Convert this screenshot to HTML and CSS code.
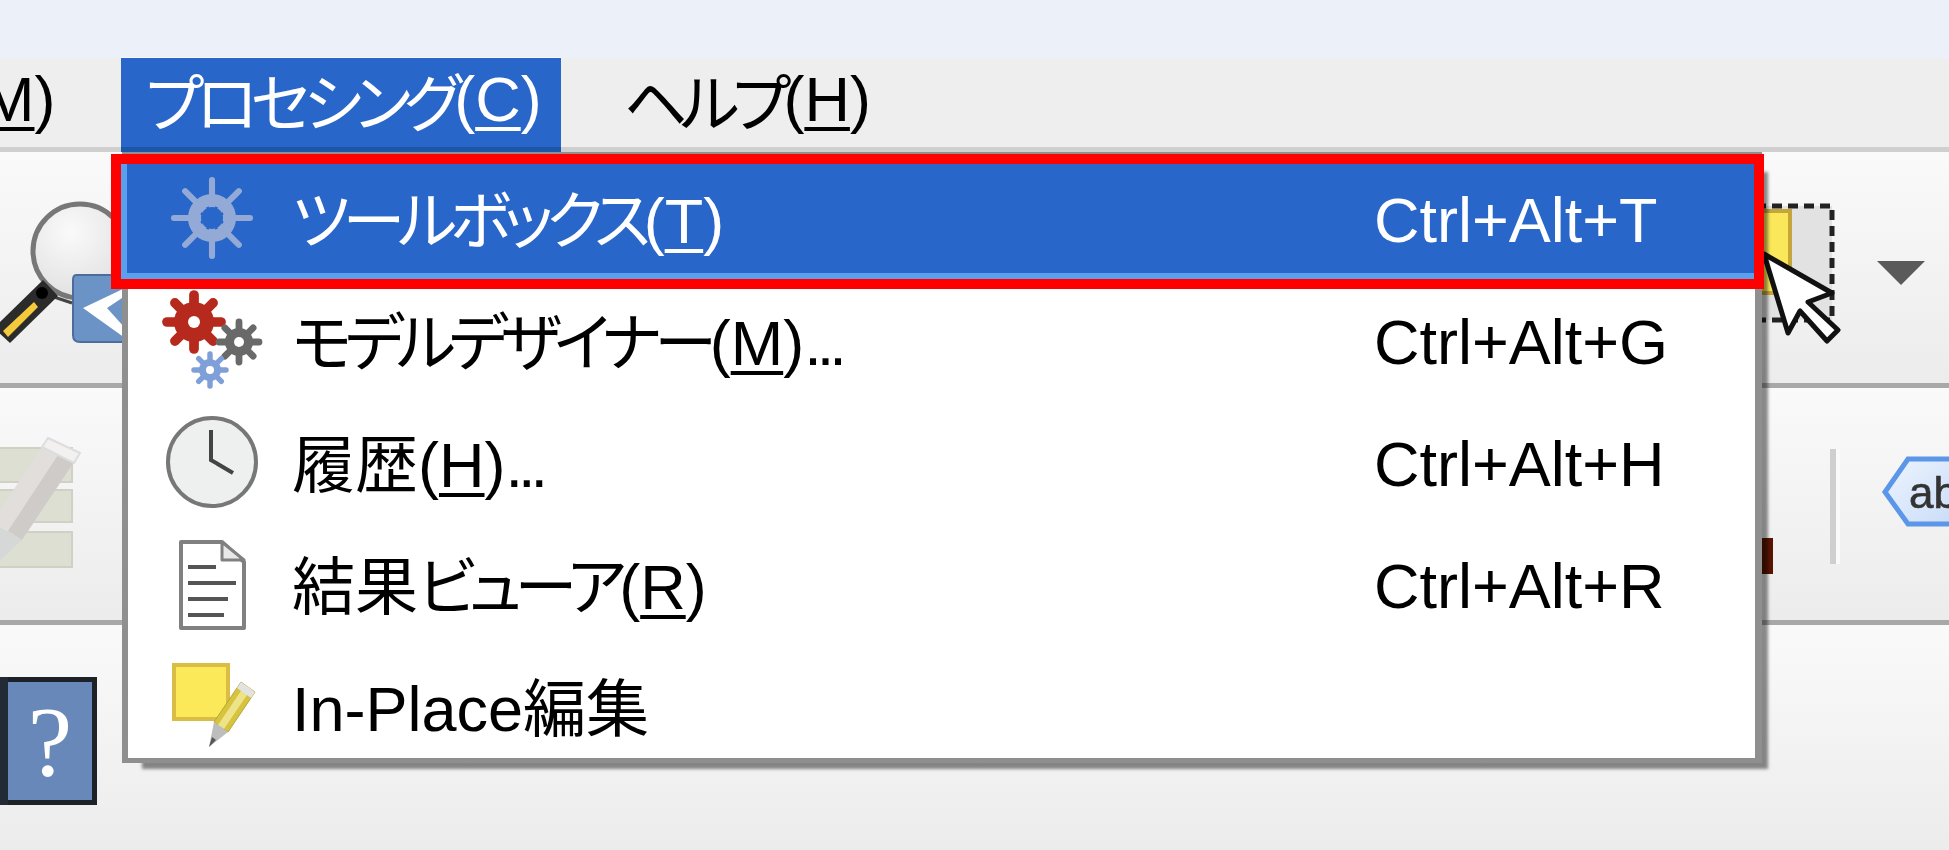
FILE: index.html
```html
<!DOCTYPE HTML>
<html lang="ja">

<head>
    <meta charset="utf-8">
    <link rel="stylesheet" href="styles.css">
    <title>プロセシング</title>
</head>

<body>
    <svg class="defs" width="0" height="0">
        <defs>
            <g id="teeth">
                <line x1="0" y1="-1" x2="0" y2="1"/>
                <line x1="-1" y1="0" x2="1" y2="0"/>
                <line x1="-.707" y1="-.707" x2=".707" y2=".707"/>
                <line x1="-.707" y1=".707" x2=".707" y2="-.707"/>
            </g>
        </defs>
    </svg>

    <div class="app">
        <div class="screen">
            <div class="titlebar"></div>

            <ul class="menubar">
                <li class="menubar-item first">(<u>M</u>)</li>
                <li class="menubar-item open"><span class="kana">プロセシング</span>(<u>C</u>)</li>
                <li class="menubar-item"><span class="kana">ヘルプ</span>(<u>H</u>)</li>
            </ul>

            <div class="toolbar toolbar-one">
                <svg class="tool-zoom" width="125" height="150" viewBox="0 200 125 150">
                    <defs>
                        <radialGradient id="lens" cx=".4" cy=".3" r=".8">
                            <stop offset="0" stop-color="#fafafa"/>
                            <stop offset="1" stop-color="#dedede"/>
                        </radialGradient>
                    </defs>
                    <circle cx="80" cy="251" r="47" fill="url(#lens)" stroke="#777" stroke-width="5"/>
                    <path d="M42 293 L72 303" stroke="#444" stroke-width="3"/>
                    <path d="M43 280 L58 296 L10 343 L-6 328 Z" fill="#2b2b2b"/>
                    <circle cx="42" cy="293" r="6" fill="#000"/>
                    <path d="M3 331 L34 302 L38 307 L8 337 Z" fill="#f4c93c"/>
                    <path d="M76 275 H125 V342 H80 Q73 342 73 335 V280 Q73 275 76 275 Z" fill="#6c93c6" stroke="#4d6c9c" stroke-width="2"/>
                    <path d="M83 308 L125 288 V296 L107 308 L125 328 V338 Z" fill="#fff"/>
                </svg>
                <div class="tool-right">
                    <svg width="90" height="150" viewBox="1755 200 90 150">
                        <rect x="1740" y="206" width="92" height="114" fill="#e2e2e2" stroke="#222" stroke-width="5" stroke-dasharray="10 6"/>
                        <rect x="1740" y="211" width="50" height="82" fill="#fae85a" stroke="#c4a63a" stroke-width="4"/>
                        <path d="M1764 254 L1832 293 L1808 302 L1838 330 L1827 341 L1800 311 L1788 333 Z" fill="#fff" stroke="#111" stroke-width="5" stroke-linejoin="round"/>
                    </svg>
                    <span class="dropdown"></span>
                </div>
            </div>

            <div class="toolbar toolbar-two">
                <svg class="tool-edit" width="90" height="140" viewBox="0 434 90 140">
                    <g fill="#dedfd3" stroke="#d0d0c4" stroke-width="2">
                        <rect x="-5" y="448" width="77" height="34"/>
                        <rect x="-5" y="490" width="77" height="32"/>
                        <rect x="-5" y="532" width="77" height="35"/>
                    </g>
                    <path d="M48 438 L80 453 L22 540 L-8 522 Z" fill="#e2dedb"/>
                    <path d="M64 446 L80 453 L22 540 L8 531 Z" fill="#cfcbc8"/>
                    <path d="M48 438 L80 453 L74 463 L42 447 Z" fill="#f3f1f0" stroke="#ddd" stroke-width="2"/>
                    <path d="M-8 522 L22 540 L-6 566 Z" fill="#d6d8d8"/>
                </svg>
                <div class="tool-right">
                    <span class="colour-bit"></span>
                    <span class="separator"></span>
                    <svg class="label-tag" width="70" height="72" viewBox="1880 456 70 72">
                        <defs>
                            <linearGradient id="tag" x1="0" x2="1" y1="0" y2="1">
                                <stop offset="0" stop-color="#eef4fd"/>
                                <stop offset="1" stop-color="#c8dcf8"/>
                            </linearGradient>
                        </defs>
                        <path d="M1960 459 H1908 L1885 492 L1908 524 H1960" fill="url(#tag)" stroke="#5c96e8" stroke-width="5"/>
                        <text x="1909" y="508" class="tag-text">ab</text>
                    </svg>
                </div>
            </div>

            <div class="toolbar toolbar-three">
                <span class="help-side"></span>
                <span class="help-button">?</span>
            </div>

            <ul class="menu">
                <li class="menu-item active">
                    <svg class="menu-icon" width="120" height="110" viewBox="152 163 120 110">
                        <g transform="translate(212 218)">
                            <use href="#teeth" transform="scale(38)" stroke="#93aad6" stroke-width=".16" stroke-linecap="round"/>
                            <circle r="18" fill="none" stroke="#93aad6" stroke-width="12"/>
                            <circle r="11" fill="#2966c9"/>
                        </g>
                    </svg>
                    <span class="menu-label"><span class="kana">ツールボックス</span>(<u>T</u>)</span>
                    <span class="shortcut">Ctrl+Alt+T</span>
                </li>
                <li class="menu-item">
                    <svg class="menu-icon" width="120" height="110" viewBox="152 285 120 110">
                        <g transform="translate(194 322)">
                            <use href="#teeth" transform="scale(27)" stroke="#b52a1c" stroke-width=".36" stroke-linecap="round"/>
                            <circle r="20" fill="#b52a1c"/>
                            <circle r="6" fill="#fff"/>
                        </g>
                        <g transform="translate(239 342)">
                            <use href="#teeth" transform="scale(20)" stroke="#696969" stroke-width=".34" stroke-linecap="round"/>
                            <circle r="14" fill="#696969"/>
                            <circle r="5" fill="#fff"/>
                        </g>
                        <g transform="translate(210 370)">
                            <use href="#teeth" transform="scale(16)" stroke="#7f9fd8" stroke-width=".34" stroke-linecap="round"/>
                            <circle r="11" fill="#7f9fd8"/>
                            <circle r="4" fill="#fff"/>
                        </g>
                    </svg>
                    <span class="menu-label"><span class="kana">モデルデザイナー</span>(<u>M</u>)<span class="dots">...</span></span>
                    <span class="shortcut">Ctrl+Alt+G</span>
                </li>
                <li class="menu-item">
                    <svg class="menu-icon" width="120" height="110" viewBox="152 407 120 110">
                        <circle cx="212" cy="462" r="44" fill="#eef0ef" stroke="#777" stroke-width="4"/>
                        <path d="M211 430 V460 L233 473" fill="none" stroke="#444" stroke-width="4"/>
                    </svg>
                    <span class="menu-label">履歴(<u>H</u>)<span class="dots">...</span></span>
                    <span class="shortcut">Ctrl+Alt+H</span>
                </li>
                <li class="menu-item">
                    <svg class="menu-icon" width="120" height="110" viewBox="152 527 120 110">
                        <path d="M181 540 H222 L244 560 V626 H181 Z" fill="#fff" stroke="#808080" stroke-width="4" stroke-linejoin="round"/>
                        <path d="M222 540 V558 H244 Z" fill="#e8e8e8" stroke="#808080" stroke-width="3" stroke-linejoin="round"/>
                        <path d="M188 565 H216 M188 581 H236 M188 597 H228 M188 613 H224" stroke="#555" stroke-width="4"/>
                    </svg>
                    <span class="menu-label">結果<span class="kana">ビューア</span>(<u>R</u>)</span>
                    <span class="shortcut">Ctrl+Alt+R</span>
                </li>
                <li class="menu-item">
                    <svg class="menu-icon" width="120" height="110" viewBox="152 651 120 110">
                        <rect x="174" y="665" width="54" height="54" fill="#fbe95a" stroke="#d9bd45" stroke-width="4"/>
                        <path d="M241 682 L255 692 L228 732 L214 722 Z" fill="#d6c43e" stroke="#b9a735" stroke-width="1"/>
                        <path d="M245 685 L251 689 L224 729 L218 725 Z" fill="#eee388"/>
                        <path d="M241 682 L255 692 L251 698 L237 688 Z" fill="#e2e2e2"/>
                        <path d="M214 722 L228 732 L209 747 Z" fill="#bdbdbd"/>
                        <path d="M212 737 L216 740 L209 747 Z" fill="#555"/>
                    </svg>
                    <span class="menu-label">In-Place編集</span>
                </li>
            </ul>
        </div>

        <div class="red-box"></div>
    </div>
</body>

</html>
```

FILE: styles.css
```css
html,
body {
    height: 100%;
    margin: 0;
    padding: 0;
    overflow: hidden;
}

body {
    font-family: "Liberation Sans", "Noto Sans CJK JP", sans-serif;
    font-size: 63px;
    font-feature-settings: "palt";
    color: #000;
    background: #eee;
}

u {
    text-decoration-thickness: 4px;
    text-underline-offset: 6px;
    text-decoration-skip-ink: none;
}

.kana {
    letter-spacing: -7px;
}

.defs {
    position: absolute;
}

.app {
    position: relative;
    height: 850px;
    overflow: hidden;
}

/* the reference is an enlarged capture, so everything but the red frame is a little soft */
.screen {
    height: 100%;
    display: flex;
    flex-direction: column;
    filter: blur(.7px);
}

.titlebar {
    height: 58px;
    background: #ecf1f9;
}

/* menu bar */

.menubar {
    display: flex;
    height: 94px;
    margin: 0;
    padding: 0;
    list-style: none;
    background: #eee;
    box-sizing: border-box;
    border-bottom: 5px solid #cfcfcf;
}

.menubar-item {
    display: flex;
    align-items: center;
    padding: 0 24px 8px;
    white-space: pre;
}

.menubar-item.first {
    margin-left: -39px;
    margin-right: 66px;
    padding: 0 0 8px;
}

.menubar-item.open {
    margin-bottom: -5px;
    margin-right: 39px;
    padding-right: 19px;
    color: #fff;
    background: #2966c9;
    border-bottom: 5px solid #1d56a8;
    box-shadow: 0 -1px 0 #f6f8fc;
}

/* toolbars */

.toolbar {
    display: flex;
    align-items: flex-start;
    box-sizing: border-box;
    background: linear-gradient(#fafafa, #ececec);
    overflow: hidden;
}

.toolbar-one {
    height: 236px;
    padding-top: 48px;
    border-bottom: 5px solid #a8a8a8;
}

.toolbar-two {
    height: 237px;
    padding-top: 46px;
    border-bottom: 5px solid #a8a8a8;
}

.toolbar-three {
    flex: 1;
    padding-top: 52px;
}

.tool-right {
    display: flex;
    margin-left: auto;
}

.toolbar-one .tool-right {
    padding-right: 24px;
}

.dropdown {
    width: 0;
    height: 0;
    margin: 61px 0 0 32px;
    border-left: 24px solid transparent;
    border-right: 24px solid transparent;
    border-top: 24px solid #5a5a5a;
}

.colour-bit {
    width: 12px;
    height: 36px;
    margin-top: 104px;
    background: #5a1500;
}

.separator {
    width: 6px;
    height: 115px;
    margin: 15px 44px 0 57px;
    background: #cfcfcf;
    box-shadow: 4px 0 0 #fafafa;
}

.label-tag {
    margin-top: 22px;
    margin-right: -1px;
}

.tag-text {
    font-family: "Liberation Sans", sans-serif;
    font-size: 44px;
    fill: #333;
    stroke: #333;
    stroke-width: .6px;
}

.help-side {
    width: 8px;
    height: 128px;
    background: #222b35;
}

.help-button {
    width: 89px;
    height: 128px;
    box-sizing: border-box;
    border: 5px solid #1d2229;
    border-left: none;
    background: #6788b8;
    color: #fff;
    font-family: "Liberation Serif", serif;
    font-size: 100px;
    line-height: 120px;
    text-align: center;
}

/* dropdown */

.menu {
    position: absolute;
    left: 122px;
    top: 152px;
    width: 1640px;
    height: 611px;
    margin: 0;
    padding: 0;
    list-style: none;
    box-sizing: border-box;
    background: #fff;
    border: solid #8f8f8f;
    border-width: 5px 7px 5px 6px;
    box-shadow: 13px 13px 3px -7px rgba(0, 0, 0, .45);
}

.menu-item {
    display: flex;
    align-items: center;
    height: 122px;
    padding-left: 24px;
    white-space: pre;
}

.menu-item.active {
    margin-left: -7px;
    padding-left: 31px;
    color: #fff;
    background: #2966c9;
    box-shadow: inset 6px -6px 0 #5aa0ee;
}

.menu-icon {
    flex: none;
    margin-right: 20px;
}

.menu-label {
    margin-bottom: 6px;
}

.shortcut {
    width: 381px;
    margin-left: auto;
    margin-top: 4px;
}

.dots {
    letter-spacing: -5px;
}

/* highlight drawn on top of the screenshot */

.red-box {
    position: absolute;
    left: 111px;
    top: 154px;
    width: 1653px;
    height: 135px;
    box-sizing: border-box;
    border: 10px solid #f00;
}
```
